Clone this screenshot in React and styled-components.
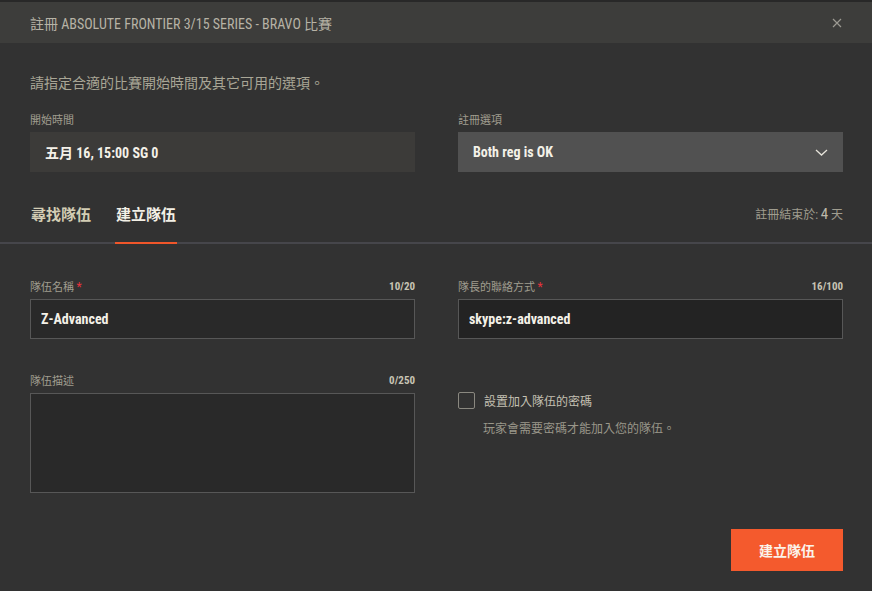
import React from "react";
import styled, { createGlobalStyle } from "styled-components";

const FONT = `"Roboto Condensed", Roboto, "Noto Sans CJK TC", sans-serif`;

export default function App() {
    return (
        <Modal>
            <GlobalStyle />
            <Header>
                <Title>註冊 ABSOLUTE FRONTIER 3/15 SERIES - BRAVO 比賽</Title>
                <Close aria-label="close">
                    <svg width="10" height="10" viewBox="0 0 10 10">
                        <path d="M1 1L9 9M9 1L1 9" stroke="#9c9a92" strokeWidth="1.2" />
                    </svg>
                </Close>
            </Header>

            <Body>
                <Intro>請指定合適的比賽開始時間及其它可用的選項。</Intro>
                <Grid>
                    <Field>
                        <LabelRow><Label>開始時間</Label></LabelRow>
                        <Box>五月 16, 15:00 SG 0</Box>
                    </Field>
                    <Field>
                        <LabelRow><Label>註冊選項</Label></LabelRow>
                        <Box light>
                            Both reg is OK
                            <svg width="13" height="7" viewBox="0 0 13 7">
                                <path d="M1 1L6.5 6L12 1" stroke="#e6e3da" strokeWidth="1.3" fill="none" />
                            </svg>
                        </Box>
                    </Field>
                </Grid>
            </Body>

            <Tabs>
                <TabList>
                    <Tab>尋找隊伍</Tab>
                    <Tab active>建立隊伍</Tab>
                </TabList>
                <Deadline>註冊結束於: <b>4</b> 天</Deadline>
            </Tabs>

            <Body>
                <FormGrid>
                    <Field>
                        <LabelRow>
                            <Label>隊伍名稱 <Req>*</Req></Label>
                            <Count>10/20</Count>
                        </LabelRow>
                        <Input defaultValue="Z-Advanced" />
                    </Field>
                    <Field>
                        <LabelRow>
                            <Label>隊長的聯絡方式 <Req>*</Req></Label>
                            <Count>16/100</Count>
                        </LabelRow>
                        <Input dark defaultValue="skype:z-advanced" />
                    </Field>
                    <Field>
                        <LabelRow>
                            <Label>隊伍描述</Label>
                            <Count>0/250</Count>
                        </LabelRow>
                        <TextArea />
                    </Field>
                    <CheckField>
                        <CheckRow>
                            <Check />
                            <CheckLabel>設置加入隊伍的密碼</CheckLabel>
                        </CheckRow>
                        <Help>玩家會需要密碼才能加入您的隊伍。</Help>
                    </CheckField>
                </FormGrid>
                <Footer>
                    <Button>建立隊伍</Button>
                </Footer>
            </Body>
        </Modal>
    );
}

const GlobalStyle = createGlobalStyle`
    body {
        margin: 0;
        background: #323232;
        font-family: ${FONT};
    }
`;

const Modal = styled.div`
    width: 872px;
    height: 591px;
    background: #323232;
    overflow: hidden;
`;

const Header = styled.div`
    height: 41px;
    border-top: 2px solid #282828;
    background: #3d3d3b;
    padding: 0 30px;
    display: flex;
    align-items: center;
    justify-content: space-between;
`;

const Title = styled.div`
    color: #b7b3a6;
    font-size: 14px;
`;

const Close = styled.div`
    display: flex;
    margin-right: 0;
`;

const Body = styled.div`
    padding: 0 29px 0 30px;
`;

const Intro = styled.div`
    margin-top: 30px;
    color: #a9a696;
    font-size: 14px;
    line-height: 20px;
`;

const Grid = styled.div`
    display: grid;
    grid-template-columns: 385px 385px;
    column-gap: 43px;
    margin-top: 19px;
`;

const FormGrid = styled(Grid)`
    margin-top: 35px;
    row-gap: 34px;
`;

const Field = styled.div`
    display: flex;
    flex-direction: column;
`;

const LabelRow = styled.div`
    display: flex;
    justify-content: space-between;
    align-items: center;
    height: 14px;
    margin-bottom: 6px;
`;

const Label = styled.span`
    color: #a09d8f;
    font-size: 11px;
`;

const Req = styled.span`
    color: #e8323c;
    font-size: 12px;
`;

const Count = styled.span`
    color: #c8c4b4;
    font-size: 11px;
    font-weight: 700;
`;

const Box = styled.div`
    height: 40px;
    box-sizing: border-box;
    padding: 0 15px 0 15px;
    display: flex;
    align-items: center;
    justify-content: space-between;
    background: ${(p) => (p.light ? "#515151" : "#3c3b39")};
    color: #f4f1e8;
    font-size: 14px;
    font-weight: 700;
`;

const Input = styled.input`
    height: 40px;
    box-sizing: border-box;
    padding: 0 10px;
    border: 1px solid #575757;
    background: ${(p) => (p.dark ? "#232323" : "#292929")};
    color: #f4f1e8;
    font-family: ${FONT};
    font-size: 14px;
    font-weight: 700;
    outline: none;
`;

const TextArea = styled.textarea`
    height: 100px;
    box-sizing: border-box;
    border: 1px solid #575757;
    background: #292929;
    resize: none;
    outline: none;
`;

const Tabs = styled.div`
    margin-top: 31px;
    padding: 0 29px 0 30px;
    border-bottom: 2px solid #46464b;
    display: flex;
    justify-content: space-between;
    align-items: flex-start;
`;

const TabList = styled.div`
    display: flex;
    gap: 23px;
`;

const Tab = styled.div`
    padding: 0 1px 15px;
    margin-bottom: -2px;
    line-height: 24px;
    font-size: 15px;
    font-weight: 700;
    color: ${(p) => (p.active ? "#f3f0e6" : "#d3cdb4")};
    border-bottom: 2px solid ${(p) => (p.active ? "#f0562a" : "transparent")};
`;

const Deadline = styled.div`
    line-height: 24px;
    color: #a09d8f;
    font-size: 12px;
    margin-top: -1px;

    b {
        font-weight: 400;
        font-size: 15px;
        color: #bdb9ab;
    }
`;

const CheckField = styled.div`
    padding-top: 19px;
`;

const CheckRow = styled.div`
    display: flex;
    align-items: center;
    gap: 9px;
`;

const Check = styled.span`
    width: 15px;
    height: 15px;
    border: 1px solid #8a8880;
    border-radius: 2px;
`;

const CheckLabel = styled.span`
    color: #c4c0b2;
    font-size: 12px;
`;

const Help = styled.div`
    margin: 10px 0 0 25px;
    color: #9a978a;
    font-size: 12px;
`;

const Footer = styled.div`
    display: flex;
    justify-content: flex-end;
    margin-top: 36px;
`;

const Button = styled.button`
    width: 112px;
    height: 42px;
    border: none;
    background: #f45a2d;
    color: #fbf3ea;
    font-family: ${FONT};
    font-size: 14px;
    font-weight: 700;
`;
